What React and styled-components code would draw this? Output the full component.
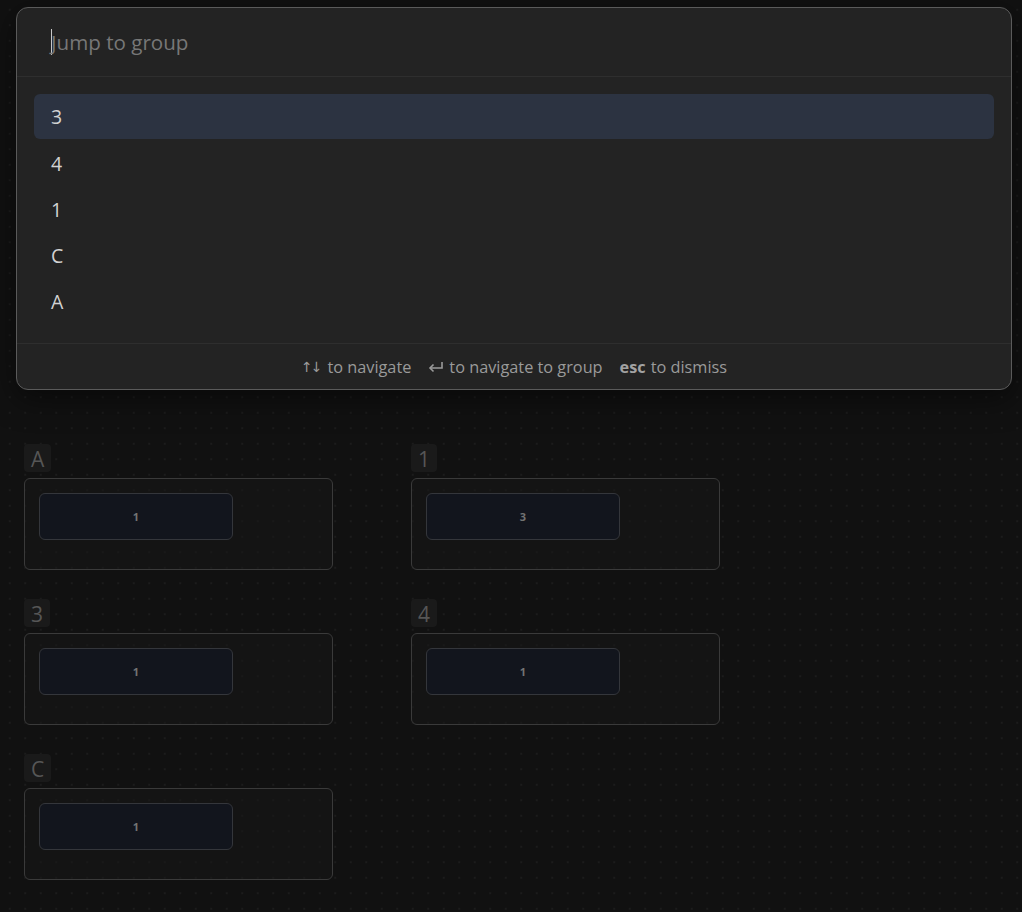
import React from 'react'
import styled, { createGlobalStyle } from 'styled-components'

const Global = createGlobalStyle`
  html, body { margin: 0; padding: 0; }
  body {
    background: #111111;
    font-family: "Open Sans", "Noto Sans", sans-serif;
  }
`

const Canvas = styled.div`
  position: relative;
  width: 1022px;
  height: 912px;
  overflow: hidden;
  background-color: #111111;
  background-image: radial-gradient(circle, #1c1c1c 1px, transparent 1.2px);
  background-size: 15.5px 15.5px;
  background-position: 2px 2px;
`

const Groups = styled.div`
  display: grid;
  grid-template-columns: repeat(2, 309px);
  column-gap: 78px;
  row-gap: 29px;
  padding: 444px 0 0 24px;
`

const Group = styled.div`
  display: flex;
  flex-direction: column;
  align-items: flex-start;
  gap: 6px;
`

const GroupLabel = styled.div`
  height: 28px;
  padding: 0 7px;
  border-radius: 4px;
  background: #1a1a1a;
  color: #565656;
  font-size: 21px;
  line-height: 30px;
`

const Card = styled.div`
  box-sizing: border-box;
  width: 309px;
  height: 92px;
  padding: 14px;
  border: 1px solid #3a3a3a;
  border-radius: 6px;
  background: rgba(24, 24, 24, 0.55);
`

const Node = styled.div`
  box-sizing: border-box;
  width: 194px;
  height: 47px;
  display: flex;
  align-items: center;
  justify-content: center;
  border: 1px solid #34363b;
  border-radius: 6px;
  background: #12151d;
  color: #737373;
  font-size: 11px;
  font-weight: 700;
`

const Dialog = styled.div`
  position: absolute;
  left: 16px;
  top: 7px;
  width: 996px;
  box-sizing: border-box;
  border: 1px solid #5a5a5a;
  border-radius: 12px;
  background: #232323;
  box-shadow: 0 8px 30px rgba(0, 0, 0, 0.5);
`

const Search = styled.div`
  height: 68px;
  display: flex;
  align-items: center;
  padding-left: 34px;
  border-bottom: 1px solid #2e2e2e;
  color: #777777;
  font-size: 20.6px;
`

const Caret = styled.span`
  display: inline-block;
  width: 1px;
  height: 26px;
  margin-right: -1px;
  background: #c8c8c8;
`

const List = styled.div`
  display: flex;
  flex-direction: column;
  padding: 17px 17px 19px;
  border-bottom: 1px solid #2e2e2e;
`

const Item = styled.div`
  height: 46px;
  display: flex;
  align-items: center;
  padding-left: 17px;
  border-radius: 6px;
  color: #d2d2d2;
  font-size: 19.5px;
  background: ${p => (p.$active ? '#2c3341' : 'transparent')};
  ${p => p.$active && 'height: 45px; margin-bottom: 1px;'}
`

const Footer = styled.div`
  height: 45px;
  display: flex;
  align-items: center;
  justify-content: center;
  gap: 17px;
  color: #9a9a9a;
  font-size: 16.3px;
`

const Hint = styled.span`
  display: flex;
  align-items: center;
  gap: 5px;
`

const Arrows = styled.span`
  font-family: "DejaVu Sans", sans-serif;
  font-size: 14px;
  letter-spacing: -2px;
  margin-right: 2px;
  color: #9a9a9a;
`

const Key = styled.b`
  font-weight: 700;
  color: #a2a2a2;
`

const EnterIcon = () => (
  <svg width="16" height="12" viewBox="0 0 16 12" fill="none" stroke="#9a9a9a" strokeWidth="1.6">
    <path d="M14 1v6H2.5" />
    <path d="M5.5 3.5 2 7l3.5 3.5" />
  </svg>
)

const groups = [
  { label: 'A', node: '1' },
  { label: '1', node: '3' },
  { label: '3', node: '1' },
  { label: '4', node: '1' },
  { label: 'C', node: '1' },
]

const items = ['3', '4', '1', 'C', 'A']

export default function App() {
  return (
    <>
      <Global />
      <Canvas>
        <Groups>
          {groups.map((g, i) => (
            <Group key={i}>
              <GroupLabel>{g.label}</GroupLabel>
              <Card>
                <Node>{g.node}</Node>
              </Card>
            </Group>
          ))}
        </Groups>
        <Dialog>
          <Search>
            <Caret />
            Jump to group
          </Search>
          <List>
            {items.map((it, i) => (
              <Item key={it} $active={i === 0}>{it}</Item>
            ))}
          </List>
          <Footer>
            <Hint><Arrows>↑↓</Arrows> to navigate</Hint>
            <Hint><EnterIcon /> to navigate to group</Hint>
            <Hint><Key>esc</Key> to dismiss</Hint>
          </Footer>
        </Dialog>
      </Canvas>
    </>
  )
}
